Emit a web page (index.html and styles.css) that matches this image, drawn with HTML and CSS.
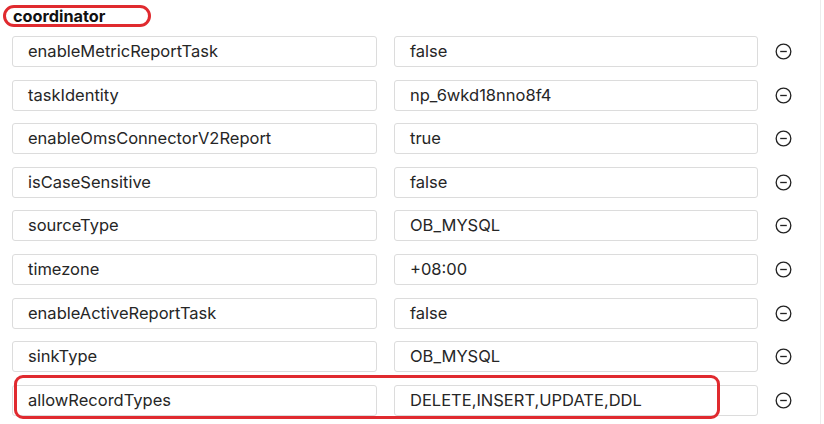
FILE: index.html
```html
<!DOCTYPE html>
<html>
<head>
<meta charset="utf-8">
<link rel="stylesheet" href="styles.css">
</head>
<body>
<div class="page">
  <div class="title">coordinator</div>
  <div class="rows">
    <div class="row"><div class="field">enableMetricReportTask</div><div class="field">false</div><span class="rm"><svg viewBox="0 0 16 16" width="17" height="17"><circle cx="8" cy="8" r="6.9" fill="none" stroke="#222" stroke-width="1.25"/><line x1="4.9" y1="8" x2="11.1" y2="8" stroke="#222" stroke-width="1.25"/></svg></span></div>
    <div class="row"><div class="field">taskIdentity</div><div class="field">np_6wkd18nno8f4</div><span class="rm"><svg viewBox="0 0 16 16" width="17" height="17"><circle cx="8" cy="8" r="6.9" fill="none" stroke="#222" stroke-width="1.25"/><line x1="4.9" y1="8" x2="11.1" y2="8" stroke="#222" stroke-width="1.25"/></svg></span></div>
    <div class="row"><div class="field">enableOmsConnectorV2Report</div><div class="field">true</div><span class="rm"><svg viewBox="0 0 16 16" width="17" height="17"><circle cx="8" cy="8" r="6.9" fill="none" stroke="#222" stroke-width="1.25"/><line x1="4.9" y1="8" x2="11.1" y2="8" stroke="#222" stroke-width="1.25"/></svg></span></div>
    <div class="row"><div class="field">isCaseSensitive</div><div class="field">false</div><span class="rm"><svg viewBox="0 0 16 16" width="17" height="17"><circle cx="8" cy="8" r="6.9" fill="none" stroke="#222" stroke-width="1.25"/><line x1="4.9" y1="8" x2="11.1" y2="8" stroke="#222" stroke-width="1.25"/></svg></span></div>
    <div class="row"><div class="field">sourceType</div><div class="field">OB_MYSQL</div><span class="rm"><svg viewBox="0 0 16 16" width="17" height="17"><circle cx="8" cy="8" r="6.9" fill="none" stroke="#222" stroke-width="1.25"/><line x1="4.9" y1="8" x2="11.1" y2="8" stroke="#222" stroke-width="1.25"/></svg></span></div>
    <div class="row"><div class="field">timezone</div><div class="field">+08:00</div><span class="rm"><svg viewBox="0 0 16 16" width="17" height="17"><circle cx="8" cy="8" r="6.9" fill="none" stroke="#222" stroke-width="1.25"/><line x1="4.9" y1="8" x2="11.1" y2="8" stroke="#222" stroke-width="1.25"/></svg></span></div>
    <div class="row"><div class="field">enableActiveReportTask</div><div class="field">false</div><span class="rm"><svg viewBox="0 0 16 16" width="17" height="17"><circle cx="8" cy="8" r="6.9" fill="none" stroke="#222" stroke-width="1.25"/><line x1="4.9" y1="8" x2="11.1" y2="8" stroke="#222" stroke-width="1.25"/></svg></span></div>
    <div class="row"><div class="field">sinkType</div><div class="field">OB_MYSQL</div><span class="rm"><svg viewBox="0 0 16 16" width="17" height="17"><circle cx="8" cy="8" r="6.9" fill="none" stroke="#222" stroke-width="1.25"/><line x1="4.9" y1="8" x2="11.1" y2="8" stroke="#222" stroke-width="1.25"/></svg></span></div>
    <div class="row"><div class="field">allowRecordTypes</div><div class="field">DELETE,INSERT,UPDATE,DDL</div><span class="rm"><svg viewBox="0 0 16 16" width="17" height="17"><circle cx="8" cy="8" r="6.9" fill="none" stroke="#222" stroke-width="1.25"/><line x1="4.9" y1="8" x2="11.1" y2="8" stroke="#222" stroke-width="1.25"/></svg></span></div>
  </div>
  <div class="mark mark-title"></div>
  <div class="mark mark-row"></div>
</div>
</body>
</html>
```

FILE: styles.css
```css
html, body {
  margin: 0;
  padding: 0;
  background: #fff;
}
.page {
  position: relative;
  width: 820px;
  height: 424px;
  border-right: 1px solid #ececec;
  font-family: Inter, "Liberation Sans", sans-serif;
  color: #262626;
  overflow: hidden;
}
.title {
  padding: 5px 0 0 13px;
  height: 31px;
  box-sizing: border-box;
  font-size: 16.3px;
  font-weight: 700;
  line-height: 22px;
  color: #111;
}
.rows {
  display: flex;
  flex-direction: column;
  gap: 12.6px;
  padding: 5px 0 0 12px;
}
.row {
  display: flex;
  align-items: center;
  height: 31px;
}
.field {
  box-sizing: border-box;
  height: 31px;
  width: 365px;
  border: 1px solid #dcdcdc;
  border-radius: 3px;
  padding: 0 14px 0 15px;
  font-size: 16.5px;
  line-height: 29px;
  white-space: nowrap;
}
.field + .field {
  margin-left: 17px;
  width: 364px;
}
.rm {
  display: flex;
  margin-left: 17px;
}
.mark {
  position: absolute;
  border: 3px solid #e02a2f;
  box-sizing: border-box;
}
.mark-title {
  left: 3px;
  top: 5px;
  width: 148px;
  height: 22px;
  border-radius: 11px;
}
.mark-row {
  left: 14px;
  top: 375px;
  width: 706px;
  height: 44px;
  border-radius: 9px;
}
```
